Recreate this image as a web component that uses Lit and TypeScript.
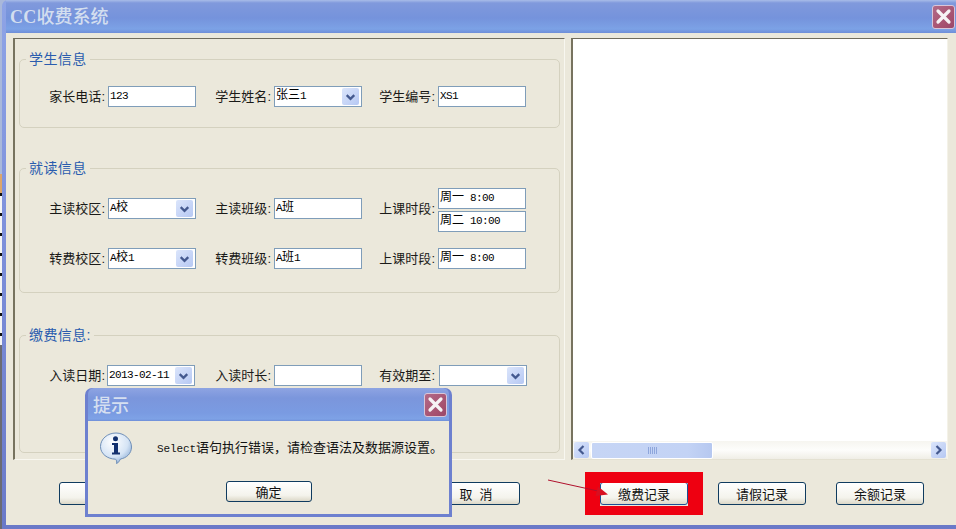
import { LitElement, html, css, svg, TemplateResult } from "lit";
import { customElement } from "lit/decorators.js";

function mix(text: string): TemplateResult[] {
  const runs = text.match(/[\x20-\x7e]+|[^\x20-\x7e]+/g) ?? [];
  return runs.map((r) =>
    /^[\x20-\x7e]/.test(r) ? html`<span class="lat">${r}</span>` : html`<span>${r}</span>`
  );
}

const chevron = svg`<path d="M5 7.500 L9 11.500 L13 7.500" fill="none" stroke="#44598f" stroke-width="2.400"/>`;

@customElement("app-root")
export class AppRoot extends LitElement {
  static styles = css`
    :host {
      display: block;
      width: 956px;
      height: 529px;
      position: relative;
      overflow: hidden;
      background:
        repeating-linear-gradient(#111 0 3px, #f4f4f4 3px 20px) 0 193px / 2px 152px no-repeat,
        linear-gradient(#a9b8da 0 174px, #dca56a 174px 193px, #f4f4f4 193px 345px, #6b6b72 345px);
      font-family: "Noto Sans CJK SC", "Liberation Sans", sans-serif;
      color: #111;
      font-size: 13px;
    }
    .window {
      margin-left: 2px;
      width: 954px;
      height: 529px;
      box-sizing: border-box;
      display: flex;
      flex-direction: column;
      background: linear-gradient(#8ea4e6, #7f92dc 40%, #6a79c8);
      border-radius: 6px 6px 0 0;
      padding: 0 0 4px 4px;
    }
    .titlebar {
      height: 33px;
      flex: none;
      display: flex;
      align-items: center;
      justify-content: space-between;
      padding: 0 1px 0 4px;
      background: linear-gradient(#a8bce8 0, #8099dc 3px, #7593dc 18px, #7ca2e6 29px, #6f8ed8 33px);
    }
    .title {
      font-size: 18px;
      line-height: 33px;
      font-weight: 500;
      color: #d3deef;
    }
    .title .lat {
      font-family: "Liberation Serif", serif;
      font-size: 18px;
      letter-spacing: 0.300px;
      font-weight: 700;
    }
    .close {
      box-sizing: border-box;
      width: 23px;
      height: 24px;
      border: 1px solid #d9c5d8;
      border-radius: 3px;
      background: linear-gradient(135deg, #b26a88, #a6506f 70%, #98486a);
      display: flex;
      align-items: center;
      justify-content: center;
    }
    .body {
      flex: 1;
      background: #ebe8db;
      display: flex;
      flex-direction: column;
      padding: 5px 8px 0 7px;
      min-height: 0;
    }
    .panes {
      display: flex;
      gap: 6px;
      height: 422px;
      flex: none;
    }
    .left {
      box-sizing: border-box;
      width: 552px;
      border-top: 1px solid #6f6b5c;
      border-left: 2px solid #77735f;
      border-right: 1px solid #f8f7f0;
      border-bottom: 1px solid #f8f7f0;
      padding: 20px 4px 0 4px;
      display: flex;
      flex-direction: column;
    }
    .right {
      box-sizing: border-box;
      width: 377px;
      background: #fff;
      border-top: 1px solid #6f6b5c;
      border-left: 2px solid #77735f;
      border-right: 1px solid #f4f2e8;
      border-bottom: 1px solid #e4e1d2;
      display: flex;
      flex-direction: column;
      justify-content: flex-end;
    }
    .group {
      box-sizing: border-box;
      flex: none;
      border: 1px solid #d4d1bf;
      border-radius: 5px;
      position: relative;
      display: flex;
      flex-direction: column;
    }
    .g1 { height: 69px; margin-bottom: 40px; padding-top: 26px; }
    .g2 { height: 125px; margin-bottom: 42px; padding-top: 19px; }
    .g3 { height: 118px; padding-top: 29px; }
    .legend {
      position: absolute;
      top: -11px;
      left: 6px;
      background: #ebe8db;
      padding: 0 3px;
      font-size: 14px;
      line-height: 19px;
      letter-spacing: 0.400px;
      color: #2a5cae;
    }
    .row {
      display: grid;
      grid-template-columns: 88px 88px 78px 88px 76px 88px;
      align-items: center;
    }
    .g2 .row + .row { margin-top: 16px; }
    .r1 > .field, .r1 > .label { margin-bottom: 3px; }
    .label {
      height: 21px;
      font-size: 13px;
      line-height: 19px;
      text-align: right;
      padding-right: 3px;
      white-space: nowrap;
      color: #1a1a18;
    }
    .colon {
      font-family: "Liberation Sans", sans-serif;
    }
    .field {
      box-sizing: border-box;
      height: 21px;
      width: 88px;
      background: #fff;
      border: 1px solid #7f9db9;
      padding: 0 0 0 1px;
      font-size: 12px;
      line-height: 13px;
      display: block;
      color: #000;
      white-space: pre;
    }
    .lat {
      font-family: "Liberation Mono", monospace;
      font-size: 11px;
      letter-spacing: -0.600px;
    }
    .combo {
      display: flex;
      justify-content: space-between;
    }
    .combo .arrow {
      box-sizing: border-box;
      width: 17px;
      height: 17px;
      margin: 1px 2px 1px 1px;
      flex: none;
      border-radius: 2px;
      background: linear-gradient(135deg, #dbe5fb, #b6c8f3);
      display: block;
    }
    .stack { display: flex; flex-direction: column; gap: 2px; }
    .date { margin-left: -1px; }
    .shift { margin-left: 1px; }
    .actions {
      flex: 1;
      display: flex;
      padding: 22px 0 0 46px;
    }
    .btn {
      box-sizing: border-box;
      width: 88px;
      height: 23px;
      flex: none;
      border: 1px solid #0f3b5f;
      border-radius: 3px;
      background: linear-gradient(#fff, #f4f3ec 70%, #dcd8c8);
      font-size: 13px;
      line-height: 21px;
      text-align: center;
      color: #111;
      font-family: inherit;
      padding: 0;
    }
    .a1 { margin-left: 285px; word-spacing: 4px; }
    .a2 { margin-left: 80px; border-color: #1c4f94; }
    .a3, .a4 { margin-left: 30px; }
    .scroll {
      height: 18px;
      flex: none;
      display: flex;
      align-items: center;
      gap: 1px;
      padding: 0 1px;
      background: linear-gradient(#f6f5f0, #fdfdfb 50%, #f0eee6);
    }
    .sbtn {
      box-sizing: border-box;
      width: 15px;
      height: 16px;
      border-radius: 2px;
      background: linear-gradient(135deg, #dbe5fb, #b6c8f3);
      flex: none;
    }
    .thumb {
      box-sizing: border-box;
      width: 122px;
      height: 17px;
      margin-left: 1px;
      border: 1px solid #fff;
      border-radius: 2px;
      background: linear-gradient(90deg, #c6d5f5, #c3d3f5 80%, #b6c8f0);
      display: flex;
      align-items: center;
      justify-content: center;
      flex: none;
    }
    .track { flex: 1; }
    .dialog {
      position: absolute;
      left: 85px;
      top: 388px;
      width: 367px;
      height: 129px;
      box-sizing: border-box;
      display: flex;
      flex-direction: column;
      background: #6d80cf;
      border-radius: 7px 7px 0 0;
      padding: 0 3px 3px 3px;
    }
    .dtitle {
      height: 33px;
      flex: none;
      display: flex;
      align-items: center;
      justify-content: space-between;
      padding: 0 2px 0 5px;
      border-radius: 6px 6px 0 0;
      background: linear-gradient(#8ea4e2 0, #7b96dc 10px, #7a9be2 25px, #7ea2e6 31px, #6f8ed8 33px);
    }
    .dname {
      font-size: 18px;
      font-weight: 500;
      color: #d5dff0;
      line-height: 33px;
    }
    .dbody {
      flex: 1;
      background: #ebe8db;
      display: flex;
      flex-direction: column;
      align-items: center;
    }
    .msg {
      width: 100%;
      box-sizing: border-box;
      display: flex;
      align-items: center;
      padding: 0 0 6px 12px;
      height: 60px;
      flex: none;
      gap: 25px;
    }
    .text {
      font-size: 13px;
      white-space: nowrap;
      color: #111;
      margin-top: -3px;
    }
    .text .lat { font-size: 11px; letter-spacing: -0.100px; }
    .ok { height: 21px; line-height: 19px; width: 86px; }
    .redbox {
      position: absolute;
      left: 585px;
      top: 472px;
      width: 118px;
      height: 43px;
      box-sizing: border-box;
      border-style: solid;
      border-color: #ee0011;
      border-width: 11px 15px 9px 15px;
    }
    .arrowline {
      position: absolute;
      left: 540px;
      top: 470px;
      width: 80px;
      height: 36px;
    }
  `;

  private lab(t: string) {
    return html`<div class="label">${t}<span class="colon">:</span></div>`;
  }
  private input(t = "") {
    return html`<div class="field">${mix(t)}</div>`;
  }
  private combo(t = "", cls = "") {
    return html`<div class="field combo ${cls}">
      <span>${mix(t)}</span>
      <svg class="arrow" viewBox="0 0 18 18">${chevron}</svg>
    </div>`;
  }

  render() {
    return html`
      <div class="window">
        <div class="titlebar">
          <div class="title">${mix("CC")}收费系统</div>
          ${this.closeBtn()}
        </div>
        <div class="body">
          <div class="panes">
            <div class="left">
              <section class="group g1">
                <div class="legend">学生信息</div>
                <div class="row">
                  ${this.lab("家长电话")}${this.input("123")}
                  ${this.lab("学生姓名")}${this.combo("张三1")}
                  ${this.lab("学生编号")}${this.input("XS1")}
                </div>
              </section>
              <section class="group g2">
                <div class="legend">就读信息</div>
                <div class="row r1">
                  ${this.lab("主读校区")}${this.combo("A校")}
                  ${this.lab("主读班级")}${this.input("A班")}
                  ${this.lab("上课时段")}
                  <div class="stack">${this.input("周一 8:00")}${this.input("周二 10:00")}</div>
                </div>
                <div class="row">
                  ${this.lab("转费校区")}${this.combo("A校1")}
                  ${this.lab("转费班级")}${this.input("A班1")}
                  ${this.lab("上课时段")}${this.input("周一 8:00")}
                </div>
              </section>
              <section class="group g3">
                <div class="legend">缴费信息<span class="colon">:</span></div>
                <div class="row">
                  ${this.lab("入读日期")}${this.combo("2013-02-11", "date")}
                  ${this.lab("入读时长")}${this.input("")}
                  ${this.lab("有效期至")}${this.combo("", "shift")}
                </div>
              </section>
            </div>
            <div class="right">
              <div class="scroll">
                <div class="sbtn">
                  <svg width="15" height="16" viewBox="0 0 15 16"><path d="M9.500 4 L5.500 8 L9.500 12" fill="none" stroke="#44598f" stroke-width="2.200"/></svg>
                </div>
                <div class="thumb">
                  <svg width="9" height="7" viewBox="0 0 9 7"><path d="M.5 0V7M2.500 0V7M4.500 0V7M6.500 0V7M8.500 0V7" stroke="#8ea6dc" stroke-width="1"/></svg>
                </div>
                <div class="track"></div>
                <div class="sbtn">
                  <svg width="15" height="16" viewBox="0 0 15 16"><path d="M5.500 4 L9.500 8 L5.500 12" fill="none" stroke="#44598f" stroke-width="2.200"/></svg>
                </div>
              </div>
            </div>
          </div>
          <div class="actions">
            <button class="btn"></button>
            <button class="btn a1">取 消</button>
            <button class="btn a2">缴费记录</button>
            <button class="btn a3">请假记录</button>
            <button class="btn a4">余额记录</button>
          </div>
        </div>
      </div>

      <div class="redbox"></div>
      <svg class="arrowline" viewBox="0 0 80 36">
        <path d="M8 10 L58 21" stroke="#b0102c" stroke-width="1" fill="none"/>
        <path d="M68 24.500 L58 16.500 L55.500 26 Z" fill="#d80f20"/>
      </svg>

      <div class="dialog">
        <div class="dtitle">
          <div class="dname">提示</div>
          ${this.closeBtn()}
        </div>
        <div class="dbody">
          <div class="msg">
            <svg width="32" height="32" viewBox="0 0 32 32">
              <defs>
                <radialGradient id="b" cx="0.4" cy="0.3" r="0.8">
                  <stop offset="0" stop-color="#ffffff"/>
                  <stop offset="0.6" stop-color="#d5e4f5"/>
                  <stop offset="1" stop-color="#7fa3cf"/>
                </radialGradient>
              </defs>
              <path d="M16 1 C24.500 1 31.500 7.500 31.500 15 C31.500 21.500 26.500 26 20.500 27 C19.500 28.500 18.500 31 16.500 31.500 C17 29.500 16.500 28 15.500 27.200 C7.500 27 .5 22 .5 14.500 C.5 7 7.500 1 16 1 Z" fill="url(#b)" stroke="#6f8fb8" stroke-width="1"/>
              <circle cx="15.500" cy="6.800" r="2.500" fill="#12306e"/>
              <path d="M12 11 H18 V20.500 H20 V22.500 H12 V20.500 H14 V13 H12 Z" fill="#12306e"/>
            </svg>
            <div class="text">${mix("Select语句执行错误\uFF0C请检查语法及数据源设置。")}</div>
          </div>
          <button class="btn ok">确定</button>
        </div>
      </div>
    `;
  }

  private closeBtn() {
    return html`<div class="close">
      <svg width="17" height="17" viewBox="0 0 17 17"><path d="M3 3 L14 14 M14 3 L3 14" stroke="#f6f2f4" stroke-width="3.200" stroke-linecap="round"/></svg>
    </div>`;
  }
}
